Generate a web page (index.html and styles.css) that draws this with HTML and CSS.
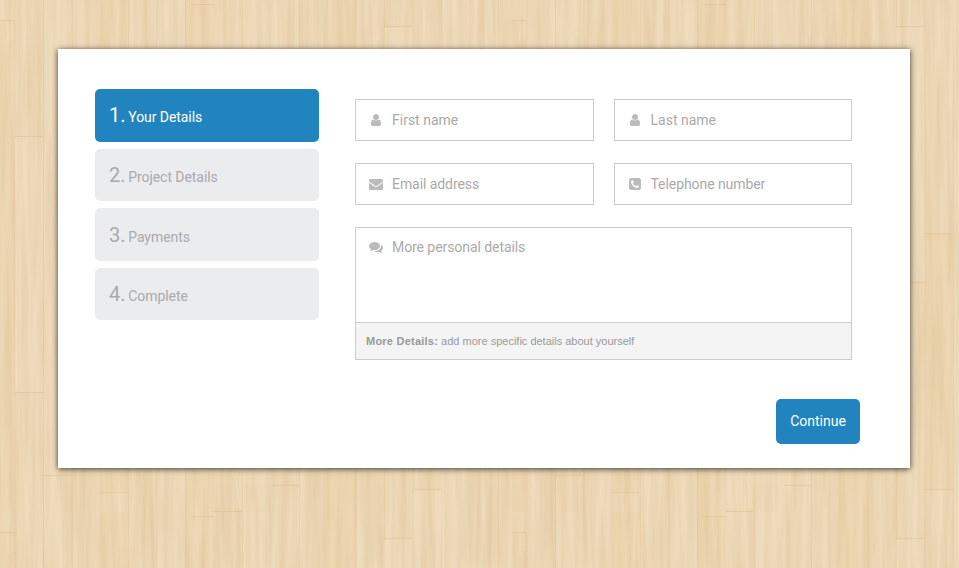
FILE: index.html
```html
<!DOCTYPE html>
<html lang="en">
<head>
<meta charset="utf-8">
<title>Your Details</title>
<link rel="stylesheet" href="styles.css">
</head>
<body>
<svg class="wood" width="959" height="568" aria-hidden="true">
  <defs>
    <filter id="grain" x="0" y="0" width="100%" height="100%" color-interpolation-filters="sRGB">
      <feTurbulence type="fractalNoise" baseFrequency="0.14 0.007" numOctaves="3" seed="7"/>
      <feColorMatrix values="0.065 0 0 0 0.888  0.09 0 0 0 0.789  0.13 0 0 0 0.634  0 0 0 0 1"/>
    </filter>
    <pattern id="planks" width="512" height="512" patternUnits="userSpaceOnUse">
      <g class="shade">
        <path d="M0 20h15v512H0zM100 0h28v491h-28zM185 0h29v512h-29zM413 233h28v256h-28zM327 0h29v512h-29z"/>
      </g>
      <g class="tint">
        <path d="M15 136h28v256H15zM44 0h28v475H44zM157 0h28v512h-28zM241 0h29v485h-29zM384 26h29v255h-29zM441 0h28v512h-28z"/>
      </g>
      <path class="seam" d="M15 0v512M43.5 0v512M72 0v512M128.500 0v512M157 0v512M185.500 0v512M242.500 0v512M299.500 0v512M356 0v512M384.500 0v512M413 0v512M441.500 0v512M498.500 0v512"/>
      <path class="joint" d="M0 20.500h14M15 136.500h28M15 392.500h28M44 475.500h28M100 492.500h28M191 4.500h23M272 485.500h27M384 26.500h28M384 282.500h28M413 233.500h28M413 489.500h28M214 511.500h28"/>
      <path class="glow" d="M16 137v250M45 476v36M233 472c4 12 6 22 7 38M237 470v40M295 468v16M8 21v20M12 21v18M385 28v250M66 462v12M70 462v12"/>
    </pattern>
  </defs>
  <rect width="959" height="568" filter="url(#grain)"/>
  <rect width="959" height="568" fill="url(#planks)"/>
</svg>
<main class="card">
  <nav class="steps">
    <a class="step active"><span class="num">1.</span> Your Details</a>
    <a class="step"><span class="num">2.</span> Project Details</a>
    <a class="step"><span class="num">3.</span> Payments</a>
    <a class="step"><span class="num">4.</span> Complete</a>
  </nav>
  <form class="form">
    <div class="fields">
      <label class="field"><svg class="icon" viewBox="0 0 1792 1792"><path d="M1536 1399q0 109-62.5 187t-150.500 78h-854q-88 0-150.500-78t-62.500-187q0-85 8.500-160.500t31.500-152 58.500-131 94-89 134.500-34.500q131 128 313 128t313-128q76 0 134.500 34.500t94 89 58.500 131 31.500 152 8.500 160.500zm-256-887q0 159-112.500 271.500t-271.500 112.500-271.500-112.500-112.500-271.500 112.500-271.500 271.500-112.500 271.500 112.500 112.500 271.500z"/></svg><span>First name</span></label>
      <label class="field"><svg class="icon" viewBox="0 0 1792 1792"><path d="M1536 1399q0 109-62.5 187t-150.500 78h-854q-88 0-150.500-78t-62.500-187q0-85 8.500-160.500t31.500-152 58.500-131 94-89 134.500-34.500q131 128 313 128t313-128q76 0 134.500 34.500t94 89 58.500 131 31.500 152 8.500 160.500zm-256-887q0 159-112.500 271.500t-271.500 112.500-271.500-112.500-112.500-271.500 112.500-271.500 271.500-112.500 271.500 112.500 112.500 271.500z"/></svg><span>Last name</span></label>
      <label class="field tight"><svg class="icon" viewBox="0 0 1792 1792"><path d="M1792 710v794q0 66-47 113t-113 47h-1472q-66 0-113-47t-47-113v-794q44 49 101 87 362 246 497 345 57 42 92.500 65.500t94.500 48 110 24.500h2q51 0 110-24.500t94.500-48 92.500-65.500q170-123 498-345 57-39 100-87zm0-294q0 79-49 151t-122 123q-376 261-468 325-10 7-42.500 31t-54 38.500-52 32.500-57.500 27-50 9h-2q-23 0-50-9t-57.500-27-52-32.500-54-38.500-42.500-31q-91-64-262-182.500t-205-142.500q-62-42-117-115.500t-55-136.500q0-78 41.500-130t118.500-52h1472q65 0 112.500 47t47.500 113z"/></svg><span>Email address</span></label>
      <label class="field tight"><svg class="icon" viewBox="0 0 1792 1792"><path d="M1408 1193q0-11-2-16t-18-16.500-40.500-25-47.500-26.500-45.500-25-28.500-15q-5-3-19-13t-25-15-21-5q-15 0-36.500 20.500t-39.500 45-38.500 45-33.500 20.500q-7 0-16.500-3.500t-15.500-6.500-17-9.500-14-8.500q-99-55-170-126.500t-127-170.500q-2-3-8.500-14t-9.500-17-6.500-15.500-3.500-16.500q0-13 20.500-33.500t45-38.500 45-39.500 20.500-36.500q0-10-5-21t-15-25-13-19q-3-6-15-28.500t-25-45.500-26.500-47.500-25-40.500-16.500-18-16-2q-48 0-101 22-46 21-80 94.500t-34 130.500q0 16 2.500 34t5 30.500 9 33 10 29.500 12.500 33 11 30q60 164 216.500 320.500t320.500 216.500q6 2 30 11t33 12.500 29.500 10 33 9 30.500 5 34 2.500q57 0 130.500-34t94.500-80q22-53 22-101zm256-777v960q0 119-84.500 203.500t-203.500 84.500h-960q-119 0-203.500-84.500t-84.500-203.500v-960q0-119 84.500-203.500t203.500-84.500h960q119 0 203.500 84.500t84.500 203.500z"/></svg><span>Telephone number</span></label>
      <div class="more">
        <label class="area tight"><svg class="icon" viewBox="0 0 1792 1792"><path d="M1408 768q0 139-94 257t-256.500 186.500-353.500 68.500q-86 0-176-16-124 88-278 128-36 9-86 16h-3q-11 0-20.500-8t-11.500-21q-1-3-1-6.500t.5-6.500 2-6l2.500-5 3.500-5.500 4-5 4.500-5 4-4.500q5-6 23-25t26-29.500 22.500-29 25-38.500 20.500-44q-124-72-195-177t-71-224q0-139 94-257t256.500-186.500 353.500-68.500 353.500 68.500 256.500 186.500 94 257zm384 256q0 120-71 224.500t-195 176.500q10 24 20.500 44t25 38.500 22.500 29 26 29.500 23 25q1 1 4 4.500t4.500 5 4 5 3.500 5.500l2.500 5 2 6 .5 6.500-1 6.500q-3 14-13 22t-22 7q-50-7-86-16-154-40-278-128-90 16-176 16-271 0-472-132 58 4 88 4 161 0 309-45t264-129q125-92 192-212t67-254q0-77-23-152 129 71 204 178t75 230z"/></svg><span>More personal details</span></label>
        <p class="hint"><b>More Details:</b> add more specific details about yourself</p>
      </div>
    </div>
    <button class="continue" type="button">Continue</button>
  </form>
</main>
</body>
</html>
```
FILE: styles.css
```css
* { box-sizing: border-box; }
body {
  margin: 0;
  height: 568px;
  overflow: hidden;
  background: #ebd5b3;
  font: 14px/20px Roboto, sans-serif;
}
.wood { position: absolute; top: 0; left: 0; z-index: -1; }
.shade { fill: #dfba7f; opacity: .09; }
.tint { fill: #f3e4ca; opacity: .15; }
.seam { fill: none; stroke: #d9b57e; stroke-opacity: .22; }
.joint { fill: none; stroke: #d6ae73; stroke-opacity: .35; }
.glow { fill: none; stroke: #f6e8cd; stroke-opacity: .4; }
.card {
  display: flex;
  align-items: flex-start;
  gap: 36px;
  width: 852px;
  height: 419px;
  margin: 49px 0 0 58px;
  padding: 40px 50px 24px 37px;
  background: #fff;
  box-shadow: 0 1px 6px rgba(0, 0, 0, .75);
}
.steps { display: flex; flex-direction: column; gap: 7px; width: 224px; }
.step {
  height: 52.600px;
  padding: 11.400px 14px;
  border-radius: 5px;
  background: #ebecee;
  color: #aaa;
  line-height: 30px;
  letter-spacing: -.06px;
}
.step.active { background: #2184be; color: #fff; }
.num { margin-right: -.6px; font-size: 20px; }
.form { display: flex; flex-direction: column; width: 505px; padding-top: 10px; }
.fields { display: grid; grid-template-columns: 1fr 1fr; gap: 22px 20px; width: 497px; }
.field {
  display: flex;
  align-items: center;
  gap: 9px;
  height: 42px;
  padding: 0 13px;
  border: 1px solid #ccc;
  color: #aaa;
}
.tight { letter-spacing: -.07px; }
.icon { width: 14px; height: 14px; fill: #bbb; flex: none; }
.more { grid-column: 1 / 3; height: 133px; border: 1px solid #ccc; }
.area { display: flex; align-items: center; gap: 9px; height: 20px; margin: 9px 13px 65px; color: #aaa; }
.hint {
  height: 37px;
  margin: 0;
  padding-left: 10px;
  border-top: 1px solid #ccc;
  background: #f4f4f4;
  color: #999;
  font: 11px/37px "Liberation Sans", Arial, sans-serif;
}
.hint b { letter-spacing: .23px; }
.continue {
  align-self: flex-end;
  width: 84px;
  height: 45px;
  margin-top: 39px;
  padding: 0;
  border: 0;
  border-radius: 5px;
  background: #2184be;
  color: #fff;
  font: 14px/45px Roboto, sans-serif;
}
```
